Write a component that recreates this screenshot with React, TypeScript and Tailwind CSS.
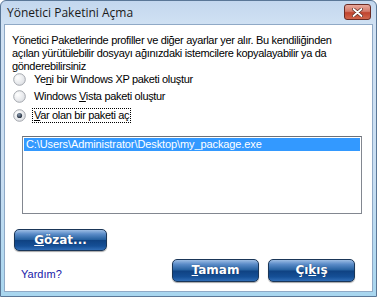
import React from "react";

const font = { fontFamily: '"Liberation Sans", Arial, sans-serif' };

function Radio({ checked }: { checked?: boolean }) {
  return (
    <svg width="13" height="13" viewBox="0 0 13 13" className="shrink-0">
      <defs>
        <radialGradient id={checked ? "rgc" : "rg"} cx="0.35" cy="0.35" r="0.8">
          <stop offset="0" stopColor="#ffffff" />
          <stop offset="1" stopColor="#d8dbe0" />
        </radialGradient>
        <radialGradient id="dot" cx="0.4" cy="0.35" r="0.7">
          <stop offset="0" stopColor="#8a9bb0" />
          <stop offset="1" stopColor="#1b2533" />
        </radialGradient>
      </defs>
      <circle cx="6.5" cy="6.5" r="5.8" fill={checked ? "url(#rgc)" : "url(#rg)"} stroke="#a3a7ad" strokeWidth="1" />
      {checked && <circle cx="6.5" cy="6.5" r="2.6" fill="url(#dot)" />}
    </svg>
  );
}

function VButton({ children, className }: { children: React.ReactNode; className?: string }) {
  return (
    <div
      className={
        "flex items-center justify-center rounded-[5px] border border-[#1a3658] text-white font-bold text-[12px] shadow-[0_1px_1px_rgba(0,0,0,0.35)] bg-[linear-gradient(to_bottom,#9dbde4_0%,#5b8cc8_20%,#25609f_48%,#0f4282_52%,#154f96_80%,#2f6db6_100%)] " +
        (className || "")
      }
      style={{ fontFamily: '"DejaVu Sans", Tahoma, sans-serif', textShadow: "0 0 1px rgba(0,0,40,0.5)" }}
    >
      {children}
    </div>
  );
}

export default function App() {
  return (
    <div
      className="w-[377px] h-[297px] flex flex-col bg-[linear-gradient(to_bottom,#c3d7ee_0%,#d0e1f3_8%,#c9def2_60%,#a8d6ef_100%)] border border-[#5a7797] rounded-t-[6px] overflow-hidden"
      style={font}
    >
      <div className="h-[23px] flex items-center justify-between pl-[6px] pr-[5px] shrink-0">
        <span className="text-[12px] text-[#1a1a1a]" style={{ fontFamily: '"Open Sans", "Noto Sans", sans-serif' }}>
          Yönetici Paketini Açma
        </span>
        <div className="w-[27px] h-[16px] mt-[-1px] rounded-[3px] border border-[#6b2b24] flex items-center justify-center bg-[linear-gradient(to_bottom,#e9a99c_0%,#d47a6a_45%,#c0442f_55%,#d1664d_100%)]">
          <svg width="11" height="9" viewBox="0 0 11 9">
            <path d="M1.5 1 L9.5 8 M9.5 1 L1.5 8" stroke="#5a2a22" strokeWidth="3.2" strokeLinecap="round" />
            <path d="M1.5 1 L9.5 8 M9.5 1 L1.5 8" stroke="#ffffff" strokeWidth="1.8" strokeLinecap="round" />
          </svg>
        </div>
      </div>
      <div className="flex-1 mx-[3px] mb-[4px] bg-white border border-[#8fa9c6] flex flex-col text-[11px] text-black">
        <div className="pl-[7px] pt-[9px] leading-[13px] whitespace-nowrap tracking-[-0.33px]">
          Yönetici Paketlerinde profiller ve diğer ayarlar yer alır. Bu kendiliğinden
          <br />
          açılan yürütülebilir dosyayı ağınızdaki istemcilere kopyalayabilir ya da
          <br />
          gönderebilirsiniz
        </div>
        <div className="pl-[8px] mt-[-2px] flex flex-col tracking-[-0.33px]">
          <div className="h-[16px] flex items-center gap-[8px]">
            <Radio />
            <span>
              Ye<u>n</u>i bir Windows XP paketi oluştur
            </span>
          </div>
          <div className="h-[19px] flex items-center gap-[8px]">
            <Radio />
            <span>
              Windows <u>V</u>ista paketi oluştur
            </span>
          </div>
          <div className="h-[19px] flex items-center gap-[7px]">
            <Radio checked />
            <span className="outline outline-1 outline-dotted outline-black px-[1px] leading-[13px]">
              <u>V</u>ar olan bir paketi aç
            </span>
          </div>
        </div>
        <div className="ml-[17px] mt-[11px] w-[340px] h-[78px] border border-[#828790] border-t-[#6d7178] bg-white p-[1px]">
          <div className="h-[13px] bg-[#3399ff] text-white leading-[13px] pl-[2px] tracking-[-0.1px]">
            C:\Users\Administrator\Desktop\my_package.exe
          </div>
        </div>
        <VButton className="ml-[9px] mt-[15px] w-[93px] h-[22px]">
          <span>
            <u>G</u>özat...
          </span>
        </VButton>
        <div className="flex items-center mt-[7px]">
          <span className="ml-[16px] mt-[8px] text-[#1818a8]">Yardım?</span>
          <VButton className="ml-auto w-[87px] h-[23px]">
            <span>
              <u>T</u>amam
            </span>
          </VButton>
          <VButton className="ml-[9px] mr-[17px] w-[87px] h-[23px]">
            <span>
              Çı<u>k</u>ış
            </span>
          </VButton>
        </div>
      </div>
    </div>
  );
}
